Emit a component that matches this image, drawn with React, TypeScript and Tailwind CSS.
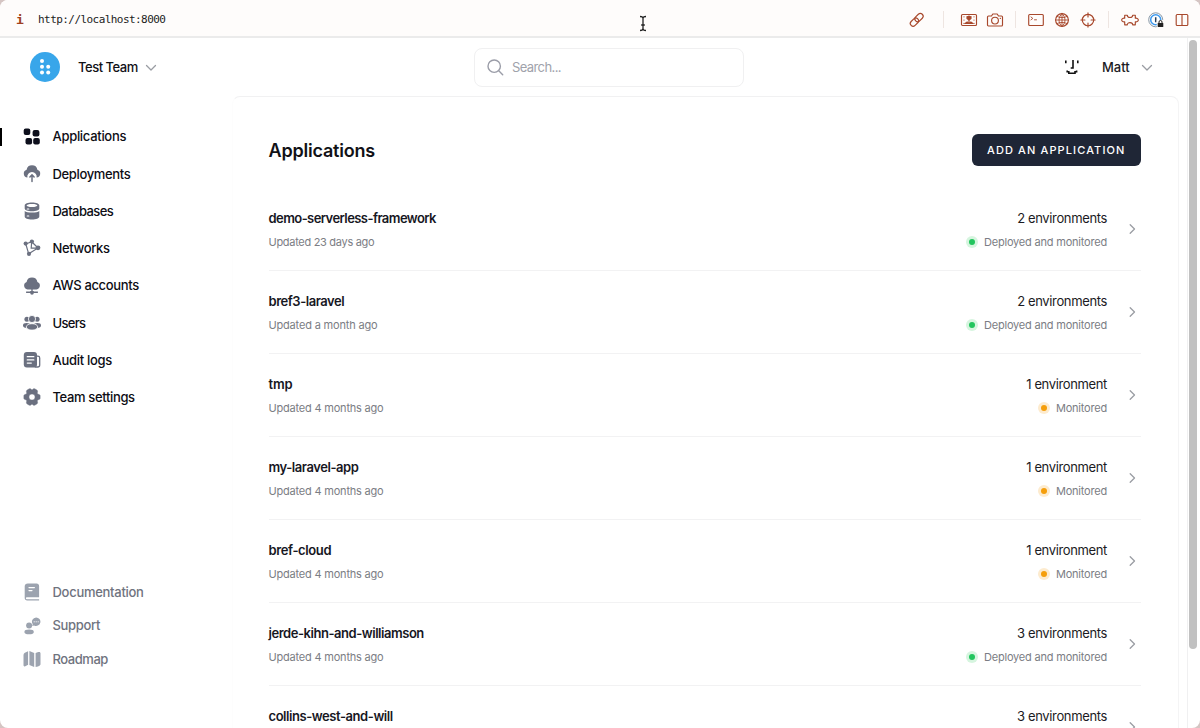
import React from 'react';

type NavItem = { label: string; icon: React.ReactNode; width: string; active?: boolean };

const Icon = ({ children, className = 'text-[#6b7080]' }: { children: React.ReactNode; className?: string }) => (
  <svg viewBox="0 0 18 18" className={'size-[18px] shrink-0 ' + className} fill="currentColor">{children}</svg>
);

const nav: NavItem[] = [
  {
    label: 'Applications', width: 'tracking-[-0.3px]', active: true,
    icon: <Icon className="text-[#0d0f1c]"><rect x="0.7" y="0.4" width="6.6" height="6.6" rx="2" /><rect x="9.6" y="2" width="6.8" height="6.6" rx="2" /><rect x="2.5" y="10" width="6.6" height="6.6" rx="2" /><rect x="10.2" y="10" width="6.6" height="6.6" rx="2" /></Icon>,
  },
  {
    label: 'Deployments', width: 'tracking-[-0.34px]',
    icon: <Icon><path d="M4.4 12.6A4 4 0 0 1 3.6 4.8a5.500 5.500 0 0 1 10.800 0 4 4 0 0 1-.8 7.800 4.700 4.700 0 1 0-9.200 0z" /><path d="M9 16.600V10.300M6.900 12 9 9.900l2.100 2.100" fill="none" stroke="currentColor" strokeWidth="1.500" strokeLinecap="round" strokeLinejoin="round" /></Icon>,
  },
  {
    label: 'Databases', width: 'tracking-[-0.56px]',
    icon: <Icon><path fillRule="evenodd" d="M1.7 3.4C1.7 1.5 4.8.4 9 .4s7.3 1.1 7.3 3v3.1C16.3 8.2 13.2 9.2 9 9.2s-7.3-1-7.3-2.7zm1.9.1C3.6 4.3 5.8 5 9 5s5.4-.7 5.4-1.5S12.2 2 9 2s-5.4.7-5.4 1.5z" /><path d="M1.7 9c1.2 1.1 3.8 1.6 7.3 1.6s6.1-.5 7.3-1.6v5.4c0 1.9-3.1 3-7.3 3s-7.3-1.1-7.3-3z" /><path d="M4.2 7h1.6M4.2 14h1.6" stroke="white" strokeWidth="1.1" strokeLinecap="round" /></Icon>,
  },
  {
    label: 'Networks', width: 'tracking-[-0.37px]',
    icon: <Icon><path d="M2.8 5 5.7 14.8 15 9 8.7 2.8z M8.7 2.8 8.2 9.2 15 9" fill="none" stroke="currentColor" strokeWidth="1.2" /><circle cx="2.7" cy="4.6" r="2.1" /><circle cx="8.9" cy="2.6" r="2.1" /><circle cx="15" cy="8.8" r="2.4" /><circle cx="6" cy="14.8" r="2.1" /></Icon>,
  },
  {
    label: 'AWS accounts', width: 'tracking-[-0.35px]',
    icon: <Icon><path d="M4.5 12.4A3.9 3.9 0 0 1 3.6 4.9a5.5 5.5 0 0 1 10.8 0 3.9 3.9 0 0 1-.9 7.5zM8.3 12.3h1.4v1.6h1.1v.7h4.1V16h-4.1a1.8 1.8 0 0 1-3.6 0H3.1v-1.4h4.1v-.7h1.1z" /></Icon>,
  },
  {
    label: 'Users', width: 'tracking-[-0.7px]',
    icon: <Icon><circle cx="3.9" cy="5.2" r="2.5" /><circle cx="14.1" cy="5.2" r="2.5" /><ellipse cx="3.7" cy="11.4" rx="3.7" ry="2.3" /><ellipse cx="14.3" cy="11.4" rx="3.7" ry="2.3" /><circle cx="9" cy="5" r="3.6" stroke="white" strokeWidth=".8" /><ellipse cx="9" cy="12.9" rx="5.7" ry="3.2" stroke="white" strokeWidth=".8" /></Icon>,
  },
  {
    label: 'Audit logs', width: 'tracking-[-0.3px]',
    icon: <Icon><rect x=".8" y="1" width="13.2" height="15.6" rx="3" /><path d="M13.6 5.2h1.3c1 0 1.8.8 1.8 1.8v7a2 2 0 0 1-2 2h-3" fill="none" stroke="currentColor" strokeWidth="1.3" /><path d="M4.3 5.7h6.5M4.3 8.9h6.5M4.3 12.1h4" stroke="white" strokeWidth="1.3" strokeLinecap="round" /></Icon>,
  },
  {
    label: 'Team settings', width: 'tracking-[-0.36px]',
    icon: <Icon><path fillRule="evenodd" stroke="currentColor" strokeWidth=".5" strokeLinejoin="round" d="M6.300.8h1.200L9 2 10.500.8h1.200l2.400 1.400.5 1-.4 2 .5.8 1.900.8.5.8v2.800l-.5.8-1.900.8-.5.8.4 2-.5 1-2.400 1.400h-1.200L9 16l-1.500 1.200H6.300l-2.400-1.400-.5-1 .4-2-.5-.8-1.900-.8-.5-.8V7.600l.5-.8 1.900-.8.5-.8-.4-2 .5-1zM9 5.900a3.100 3.100 0 1 0 0 6.200 3.100 3.100 0 0 0 0-6.200z" /></Icon>,
  },
];

const help: NavItem[] = [
  { label: 'Documentation', width: 'tracking-[-0.28px]', icon: <Icon className="text-[#9ca3af]"><path d="M4.8.4h8.8c1.5 0 2.5 1 2.5 2.5v11.3H4.3c-.9 0-1.4.4-1.4 1s.5 1 1.4 1h11.8v1.2H4.3c-1.7 0-2.6-.9-2.6-2.4V3.3C1.7 1.5 2.9.4 4.8.4z" /><path d="M6 4.6h5.4M6 7.6h3" stroke="white" strokeWidth="1.2" strokeLinecap="round" /></Icon> },
  { label: 'Support', width: 'tracking-[-0.33px]', icon: <Icon className="text-[#9ca3af]"><circle cx="6.1" cy="8.6" r="3" /><ellipse cx="6.1" cy="14.9" rx="4.7" ry="2.4" /><path d="M13.1.4a4.3 4.3 0 1 1-2 8.1l-1.9.4.5-1.8A4.3 4.3 0 0 1 13.1.4z" /><path d="M10.7 4.8h1m1 0h1m1 0h1" stroke="white" strokeWidth="1" /></Icon> },
  { label: 'Roadmap', width: 'tracking-[-0.45px]', icon: <Icon className="text-[#9ca3af]"><path d="M.5 5.2c0-2 1.1-2.7 4.6-4v13.6l-2.8 1.5C1.1 16.8.5 16.2.5 15zM6.4 1.1 11.2 3v14l-4.8-2zM12.6 3l2.7-.9c1.5-.5 2.2.1 2.2 1.4v10.7c0 1.3-1.1 2-4.9 2.8z" /></Icon> },
];

type AppRow = { name: string; tracking: string; updated: string; updatedTracking: string; environments: string; status: 'Deployed and monitored' | 'Monitored' };
const rows: AppRow[] = [
  { name: 'demo-serverless-framework', tracking: 'tracking-[-0.57px]', updated: '23 days ago', updatedTracking: 'tracking-[-0.3px]', environments: '2 environments', status: 'Deployed and monitored' },
  { name: 'bref3-laravel', tracking: 'tracking-[-0.47px]', updated: 'a month ago', updatedTracking: 'tracking-[-0.18px]', environments: '2 environments', status: 'Deployed and monitored' },
  { name: 'tmp', tracking: 'tracking-[-0.18px]', updated: '4 months ago', updatedTracking: 'tracking-[-0.2px]', environments: '1 environment', status: 'Monitored' },
  { name: 'my-laravel-app', tracking: 'tracking-[-0.44px]', updated: '4 months ago', updatedTracking: 'tracking-[-0.2px]', environments: '1 environment', status: 'Monitored' },
  { name: 'bref-cloud', tracking: 'tracking-[-0.38px]', updated: '4 months ago', updatedTracking: 'tracking-[-0.2px]', environments: '1 environment', status: 'Monitored' },
  { name: 'jerde-kihn-and-williamson', tracking: 'tracking-[-0.46px]', updated: '4 months ago', updatedTracking: 'tracking-[-0.2px]', environments: '3 environments', status: 'Deployed and monitored' },
  { name: 'collins-west-and-will', tracking: 'tracking-[-0.44px]', updated: '4 months ago', updatedTracking: 'tracking-[-0.2px]', environments: '3 environments', status: 'Deployed and monitored' },
];

const Chevron = ({ down = false }: { down?: boolean }) => (
  <svg viewBox="0 0 12 12" className="size-3 shrink-0 text-[#9a9da3]" fill="none" stroke="currentColor" strokeWidth="1.3" strokeLinecap="round" strokeLinejoin="round">
    <path d={down ? 'M1.5 4.5 6 9l4.5-4.5' : 'M4.2 1.7 8.500 6 4.200 10.300'} />
  </svg>
);

const ToolIcon = ({ children }: { children: React.ReactNode }) => (
  <svg viewBox="0 0 18 18" className="size-[18px] shrink-0 text-[#a8482c]" fill="none" stroke="currentColor" strokeWidth="1.15" strokeLinecap="round" strokeLinejoin="round">{children}</svg>
);

const Divider = () => <span className="h-[17px] w-px bg-[#eee5e1]" />;

function BrowserBar() {
  return (
    <header className="flex h-[38px] shrink-0 items-center border-b-2 border-[#ebebeb] bg-[#fefcfb] pl-4 pr-[9px] pt-[3px]">
      <span className="w-[22px] font-['DejaVu_Sans_Mono',monospace] text-[13px] font-bold text-[#a04020]">i</span>
      <span className="pt-[2px] font-['DejaVu_Sans_Mono',monospace] text-[11px] tracking-[-0.56px] text-[#222]">http://localhost:8000</span>
      <svg viewBox="0 0 10 18" className="ml-[472.5px] mt-2 h-[18px] w-2.5" fill="none" stroke="#222" strokeWidth="1.3"><path d="M2 1.5c2 0 3 .6 3 2v10c0 1.4-1 2-3 2m6-14c-2 0-3 .6-3 2m3 12c-2 0-3-.6-3-2M3.2 10h3.6" /></svg>
      <div className="ml-auto flex items-center">
        <ToolIcon><g transform="rotate(-45 9 9)"><rect x="1" y="5.9" width="9.4" height="5.6" rx="2.8" /><rect x="7.4" y="5.9" width="9.4" height="5.6" rx="2.8" /></g></ToolIcon>
        <div className="ml-[17px] mr-[16px] flex"><Divider /></div>
        <div className="flex gap-2">
          <ToolIcon><rect x="1.500" y="3.500" width="15" height="11" rx="1" /><path d="m5 12.500 2.200-1.500L9 12.500l1.800-1.500 2.200 1.500z" fill="currentColor" /><path d="m7 5.500 1 .6L9 5l1 1.100 1-.6v2L9 9 7 7.500z" fill="currentColor" /><path d="M4 5.700v.1M14 5.700v.1M4 9v.1M14 9v.1M4 12.300v.1M14 12.300v.1M9 9v3" /></ToolIcon>
          <ToolIcon><path d="M2.500 5h3l1.300-2h4.400l1.300 2h3c.7 0 1 .4 1 1v8c0 .6-.4 1-1 1h-13c-.7 0-1-.4-1-1V6c0-.6.3-1 1-1z" /><circle cx="9" cy="9.600" r="3.400" /><path d="M14.200 7.300h.3" /></ToolIcon>
        </div>
        <div className="mx-[11px] flex"><Divider /></div>
        <div className="flex gap-2">
          <ToolIcon><rect x="1.700" y="3.500" width="14.600" height="11" rx="1" /><path d="m4 6 1.800 1.400L4 8.800M7.500 8.800h2" strokeWidth=".9" /></ToolIcon>
          <ToolIcon><circle cx="9" cy="9" r="6.400" /><path d="M9 2.600C5 6 5 12 9 15.400 13 12 13 6 9 2.600zM2.600 9h12.800M3.800 5.400c3 1.600 7.400 1.600 10.400 0M3.800 12.600c3-1.600 7.400-1.600 10.400 0M9 2.600v12.800" strokeWidth=".9" /></ToolIcon>
          <ToolIcon><circle cx="9" cy="9" r="5.700" /><path d="M9 1.900v4M9 12.100v4M1.900 9h4M12.100 9h4" /></ToolIcon>
        </div>
        <div className="ml-[11px] mr-[12px] flex"><Divider /></div>
        <div className="flex gap-2">
          <ToolIcon><path d="M3.700 4.200h2.600c0 3 5.400 3 5.400 0h2.600v3c4-.5 4 4.100 0 3.600v3h-2.600c0-3-5.400-3-5.400 0H3.700v-3c-4 .5-4-4.100 0-3.600z" /></ToolIcon>
          <svg viewBox="0 0 18 18" className="size-[18px]"><circle cx="8.700" cy="8.800" r="7" fill="none" stroke="#8797a6" strokeWidth="1" /><circle cx="8.700" cy="8.800" r="5" fill="#fff" stroke="#3c99ef" strokeWidth="1.500" /><path d="M8.700 6.200v5" stroke="#233f60" strokeWidth="1.500" /><rect x="9.800" y="9" width="7.500" height="8" fill="#fefcfb" /><rect x="10.700" y="12" width="5.600" height="4" rx=".6" fill="#222" /><path d="M12 12v-1a1.500 1.500 0 0 1 3 0v1" fill="none" stroke="#222" /></svg>
          <ToolIcon><rect x="3.200" y="3.500" width="11.600" height="11" rx="1" /><path d="M9 3.500v11" /></ToolIcon>
        </div>
      </div>
    </header>
  );
}

function TopBar() {
  return (
    <div className="flex h-[58px] shrink-0 items-center">
      <div className="flex w-[474px] items-center pl-[30px]">
        <svg viewBox="0 0 30 30" className="size-[30px]"><circle cx="15" cy="15" r="15" fill="#38a6ea" /><g fill="white"><circle cx="12" cy="8.9" r="2" /><circle cx="12" cy="14.8" r="2" /><circle cx="12" cy="20.6" r="2" /><circle cx="18.2" cy="14.8" r="2" /><circle cx="18.2" cy="20.6" r="2" /></g></svg>
        <span className="ml-[18px] mr-[6px] w-[61px] whitespace-nowrap pt-[2px] text-[13px] font-medium tracking-[-0.48px] text-[#111116]">Test Team</span>
        <Chevron down />
      </div>
      <div className="flex h-[39px] w-[270px] items-center gap-2 rounded-lg border border-[#f0f0f1] pl-3">
        <svg viewBox="0 0 17 17" className="size-[17px] text-[#9b9da8]" fill="none" stroke="currentColor" strokeWidth="1.4" strokeLinecap="round"><circle cx="7.200" cy="7.200" r="6.200" /><path d="m12 12 3.700 3.700" /></svg>
        <span className="pt-[2px] text-[13px] tracking-[-0.6px] text-[#a0a2ab]">Search...</span>
      </div>
      <div className="ml-auto flex items-center pr-[34px]">
        <svg viewBox="0 0 16 16" className="size-4" fill="none" stroke="#111" strokeWidth="1.6"><path d="M1.800 1.500v2.700M13.800 1.500v2.700M9 1v8H6.700M3.200 11.500v1.200h1.600v1.500H11v-1.500h1.600v-1.200" /></svg>
        <span className="ml-[22px] mr-[11px] w-[28px] whitespace-nowrap pt-[2px] text-[13px] font-medium tracking-[-0.04px] text-[#1b1b23]">Matt</span>
        <Chevron down />
      </div>
    </div>
  );
}

function Sidebar() {
  return (
    <aside className="flex w-[232px] shrink-0 flex-col pt-[22px]">
      <nav>
        {nav.map((item) => (
          <div key={item.label} className="flex h-[37.25px] items-center">
            <span className={item.active ? 'h-[18px] w-[2px] bg-black' : 'h-[18px] w-[2px]'} />
            <span className="ml-[21px] mr-[11.5px]">{item.icon}</span>
            <span className={'whitespace-nowrap pt-[1px] text-[13px] font-medium text-[#0d0d14] ' + item.width}>{item.label}</span>
          </div>
        ))}
      </nav>
      <nav className="mb-[52px] mt-auto">
        {help.map((item) => (
          <div key={item.label} className="flex h-[33.6px] items-center pl-[23px]">
            <span className="mr-[11.5px]">{item.icon}</span>
            <span className={'whitespace-nowrap pt-[1px] text-[13px] font-medium text-[#6f737e] ' + item.width}>{item.label}</span>
          </div>
        ))}
      </nav>
    </aside>
  );
}

function ApplicationRow({ row }: { row: AppRow }) {
  const deployed = row.status === 'Deployed and monitored';
  return (
    <li className="flex h-[83px] shrink-0 items-center justify-between border-b border-[#f2f2f3]">
      <div className="pt-[2px]">
        <h2 className={'text-[13px] font-semibold leading-6 text-[#17171f] ' + row.tracking}>{row.name}</h2>
        <p className={'text-[11px] leading-6 text-[#7b7d84] ' + row.updatedTracking}>Updated {row.updated}</p>
      </div>
      <div className="flex items-center pr-[3px]">
        <div className="pt-[2px] text-right">
          <p className="text-[13px] leading-6 tracking-[-0.36px] text-[#1b1b23]">{row.environments}</p>
          <div className="flex items-center justify-end gap-1.5 text-[11px] leading-6 tracking-[-0.2px] text-[#7b7d84]">
            <span className={deployed ? 'flex size-3 items-center justify-center rounded-full bg-[#d6f5df]' : 'flex size-3 items-center justify-center rounded-full bg-[#fdebce]'}>
              <span className={deployed ? 'size-1.5 rounded-full bg-[#22c55e]' : 'size-1.5 rounded-full bg-[#f59e0b]'} />
            </span>
            <span>{row.status}</span>
          </div>
        </div>
        <span className="ml-[19px]"><Chevron /></span>
      </div>
    </li>
  );
}

export default function App() {
  return (
    <div className="h-[728px] w-[1200px] overflow-hidden bg-[#d5c5c3] font-['Inter',sans-serif]">
      <div className="flex h-full flex-col overflow-hidden rounded-lg bg-white">
        <BrowserBar />
        <div className="flex min-h-0 flex-1">
          <div className="flex min-w-0 flex-1 flex-col">
            <TopBar />
            <div className="flex min-h-0 flex-1">
              <Sidebar />
              <main className="mr-[8px] flex min-w-0 flex-1 flex-col overflow-hidden rounded-t-lg border-x border-t border-l-[#fdfdfd] border-r-[#f4f4f5] border-t-[#f1f1f2] pl-[35.5px] pr-[37px] pt-[37px]">
                <div className="flex h-8 shrink-0 items-center justify-between">
                  <h1 className="text-[18px] font-semibold tracking-[-0.2px] text-[#111116]">Applications</h1>
                  <button className="flex h-8 w-[169.5px] items-center justify-center rounded-md bg-[#1f2636] text-[11px] font-medium tracking-[1.12px] text-white">ADD AN APPLICATION</button>
                </div>
                <ul className="mt-[22px] flex flex-col">{rows.map((row) => <ApplicationRow key={row.name} row={row} />)}</ul>
              </main>
            </div>
          </div>
          <div className="flex w-[13px] border-l border-[#f0f0f1] pl-px pt-0.5">
            <span className="h-[609px] w-[8px] rounded-full bg-[#c1c1c1]" />
          </div>
        </div>
      </div>
    </div>
  );
}
